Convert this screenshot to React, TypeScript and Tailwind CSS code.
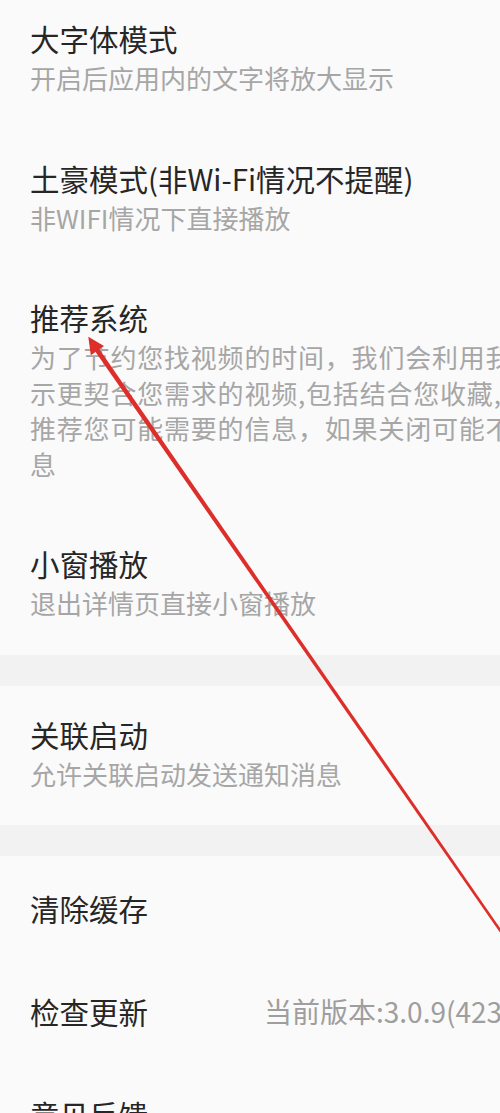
import React from 'react';

type Item = {
  title: string;
  desc?: string[];
  value?: string;
};

const groups: Item[][] = [
  [
    { title: '大字体模式', desc: ['开启后应用内的文字将放大显示'] },
    { title: '土豪模式(非Wi-Fi情况不提醒)', desc: ['非WIFI情况下直接播放'] },
    {
      title: '推荐系统',
      desc: [
        '为了节约您找视频的时间，我们会利用我们的推荐系统为您展',
        '示更契合您需求的视频,包括结合您收藏,观看记录等为您',
        '推荐您可能需要的信息，如果关闭可能不会为您推荐相关信',
        '息',
      ],
    },
    { title: '小窗播放', desc: ['退出详情页直接小窗播放'] },
  ],
  [{ title: '关联启动', desc: ['允许关联启动发送通知消息'] }],
  [
    { title: '清除缓存' },
    { title: '检查更新', value: '当前版本:3.0.9(4230)' },
    { title: '意见反馈' },
  ],
];

const SettingRow = ({ item }: { item: Item }) => {
  if (!item.desc) {
    return (
      <div className="flex items-center px-[30px] pt-[34px] pb-[33px]">
        <span className="text-[29.5px] leading-[36px] text-[#262626] whitespace-nowrap">{item.title}</span>
        {item.value && (
          <span className="ml-[116px] text-[28px] leading-[36px] text-[#9e9e9e] whitespace-nowrap">{item.value}</span>
        )}
      </div>
    );
  }
  const long = item.desc.length > 1;
  return (
    <div className="px-[30px] pt-[30px] pb-[34px]">
      <div className="text-[29.5px] leading-[36px] text-[#262626] whitespace-nowrap">{item.title}</div>
      <div className="mt-[4px]">
        {item.desc.map((line, i) => (
          <div
            key={i}
            className={`text-[26px] leading-[35.5px] text-[#a6a6a6] whitespace-nowrap ${long ? 'tracking-[0.8px]' : ''}`}
          >
            {line}
          </div>
        ))}
      </div>
    </div>
  );
};

const App = () => {
  return (
    <div className="relative w-[500px] h-[1113px] overflow-hidden bg-[#fafafa] font-['Noto_Sans_CJK_SC',sans-serif]">
      <div className="-mt-[10px]">
        {groups.map((group, gi) => (
          <div key={gi}>
            {gi > 0 && <div className="h-[31px] bg-[#f2f2f2]" />}
            {group.map((item) => (
              <SettingRow key={item.title} item={item} />
            ))}
          </div>
        ))}
      </div>

      {/* red annotation arrow */}
      <svg className="absolute inset-0 pointer-events-none" width="500" height="1113" viewBox="0 0 500 1113">
        <polygon points="95.2,351.4 99,348.8 521,958.3 519,959.7" fill="#dd2e29" />
        <polygon points="88.3,336.8 90.8,355.2 104,346.1" fill="#dd2e29" />
      </svg>
    </div>
  );
};

export default App;
